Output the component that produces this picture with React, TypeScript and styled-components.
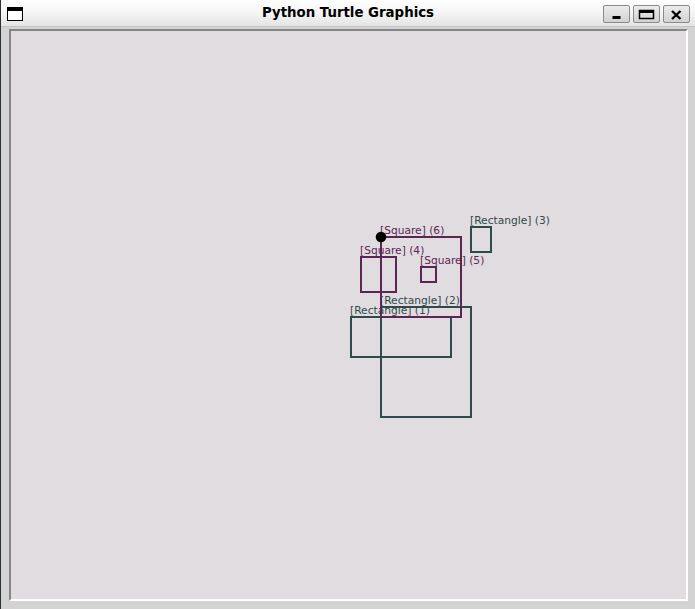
import React from "react";
import styled, { createGlobalStyle } from "styled-components";

const Global = createGlobalStyle`
  html, body { margin: 0; padding: 0; background: #d4d4d4; overflow: hidden; }
  * { box-sizing: border-box; }
`;

const Window = styled.div`
  width: 695px;
  height: 609px;
  display: flex;
  flex-direction: column;
  background: #d3d3d3;
  border-left: 1px solid #2e3036;
  font-family: "DejaVu Sans", "Liberation Sans", sans-serif;
`;

const TitleBar = styled.div`
  height: 27px;
  flex: none;
  display: grid;
  grid-template-columns: 1fr auto 1fr;
  align-items: start;
  background: linear-gradient(#ffffff 0%, #f6f6f6 45%, #e4e4e4 100%);
  border-bottom: 1px solid #c4c4c4;
`;

const AppIcon = styled.div`
  margin: 7px 0 0 6px;
  width: 16px;
  height: 14px;
  border: 1px solid #000;
  border-top: 4px solid #000;
  background: #fff;
`;

const Title = styled.div`
  font-weight: bold;
  font-size: 13.33px;
  line-height: 15px;
  padding-top: 5px;
  color: #000;
`;

const Buttons = styled.div`
  display: flex;
  justify-content: flex-end;
  gap: 3px;
  padding: 5px 5px 0 0;
`;

const WinButton = styled.div`
  width: 27px;
  height: 18px;
  border: 1px solid #8a8a8a;
  border-radius: 2px;
  background: linear-gradient(#ececec, #d2d2d2);
  display: flex;
  align-items: center;
  justify-content: center;
`;

const Body = styled.div`
  flex: 1;
  display: flex;
  padding: 2px 7px 8px 8px;
`;

const Canvas = styled.div`
  flex: 1;
  display: flex;
  background: #e1dce0;
  border-top: 2px solid #858585;
  border-left: 2px solid #858585;
  border-bottom: 2px solid #ffffff;
  border-right: 2px solid #ffffff;
  overflow: hidden;
`;

const Drawing = styled.svg`
  display: block;
  width: 675px;
  height: 568px;
`;

const Label = styled.text`
  font-family: "DejaVu Sans", "Liberation Sans", sans-serif;
  font-size: 10.67px;
`;

const PURPLE = "#5c2654";
const TEAL = "#2f4a4a";

type Shape = { x: number; y: number; w: number; h: number; label: string; color: string };

const shapes: Shape[] = [
  { x: 351, y: 317, w: 100, h: 40, label: "[Rectangle] (1)", color: TEAL },
  { x: 381, y: 307, w: 90, h: 110, label: "[Rectangle] (2)", color: TEAL },
  { x: 471, y: 227, w: 20, h: 25, label: "[Rectangle] (3)", color: TEAL },
  { x: 361, y: 257, w: 35, h: 35, label: "[Square] (4)", color: PURPLE },
  { x: 421, y: 267, w: 15, h: 15, label: "[Square] (5)", color: PURPLE },
  { x: 381, y: 237, w: 80, h: 80, label: "[Square] (6)", color: PURPLE },
];

export default function App() {
  return (
    <>
      <Global />
      <Window>
        <TitleBar>
          <div>
            <AppIcon />
          </div>
          <Title>Python Turtle Graphics</Title>
          <Buttons>
            <WinButton>
              <svg width="25" height="16" viewBox="0 0 25 16">
                <rect x="8.5" y="10" width="8" height="3" fill="#000" />
              </svg>
            </WinButton>
            <WinButton>
              <svg width="25" height="16" viewBox="0 0 25 16">
                <rect x="5.5" y="4.5" width="14" height="8" fill="none" stroke="#000" strokeWidth="1.5" />
                <rect x="5" y="4" width="15" height="3" fill="#000" />
              </svg>
            </WinButton>
            <WinButton>
              <svg width="25" height="16" viewBox="0 0 25 16">
                <path d="M8 5 L16.5 13 M16.5 5 L8 13" stroke="#000" strokeWidth="2.4" />
              </svg>
            </WinButton>
          </Buttons>
        </TitleBar>
        <Body>
          <Canvas>
            <Drawing viewBox="11 31 675 568">
              {shapes.map((s) => (
                <g key={s.label}>
                  <rect
                    x={s.x}
                    y={s.y}
                    width={s.w}
                    height={s.h}
                    fill="none"
                    stroke={s.color}
                    strokeWidth={2}
                  />
                  <Label x={s.x - 1} y={s.y - 3} fill={s.color}>
                    {s.label}
                  </Label>
                </g>
              ))}
              <circle cx={381} cy={237} r={5.3} fill="#000" />
            </Drawing>
          </Canvas>
        </Body>
      </Window>
    </>
  );
}
